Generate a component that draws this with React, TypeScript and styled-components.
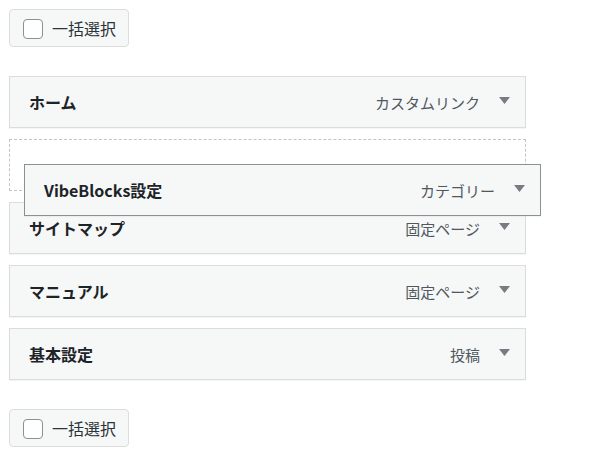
import styled, { createGlobalStyle } from "styled-components";

const GlobalStyle = createGlobalStyle`
  html, body {
    margin: 0;
    padding: 0;
    background: #fff;
  }
  body {
    font-family: "Noto Sans CJK JP", "Noto Sans", sans-serif;
    color: #1d2327;
  }
`;

const Page = styled.div`
  padding: 9px;
  width: 517px;
`;

const BulkSelect = styled.label`
  display: flex;
  align-items: center;
  gap: 9px;
  box-sizing: border-box;
  width: 120px;
  height: 38px;
  padding: 0 0 0 13px;
  background: #f6f7f7;
  border: 1px solid #dcdcde;
  border-radius: 4px;
  font-size: 16px;
  color: #2c3338;
`;

const Checkbox = styled.span`
  display: block;
  box-sizing: border-box;
  width: 20px;
  height: 20px;
  margin-top: 1px;
  background: #fff;
  border: 1px solid #8c8f94;
  border-radius: 4px;
`;

const MenuList = styled.ul`
  list-style: none;
  margin: 29px 0;
  padding: 0;
  display: flex;
  flex-direction: column;
  gap: 11px;
`;

const ItemBar = styled.li<{ $dragging?: boolean }>`
  display: flex;
  align-items: center;
  box-sizing: border-box;
  width: 517px;
  height: 52px;
  padding: 0 15px 0 19px;
  background: #f6f7f7;
  border: 1px solid ${(p) => (p.$dragging ? "#8c8f94" : "#dcdcde")};
  box-shadow: 0 1px 1px rgba(0, 0, 0, 0.04);
`;

const Placeholder = styled.li`
  position: relative;
  box-sizing: border-box;
  height: 52px;
  border: 1px dashed #c3c4c7;
`;

const Dragged = styled.div`
  position: absolute;
  left: 14px;
  top: 24px;
  z-index: 2;
`;

const Title = styled.span`
  flex: 1;
  font-size: 16px;
  font-weight: 700;
  color: #1d2327;
`;

const ItemType = styled.span`
  font-size: 15px;
  color: #50575e;
  margin-right: 19px;
`;

const Arrow = () => (
  <svg width="11" height="7" viewBox="0 0 11 7" style={{ marginTop: -4 }}>
    <polygon points="0,0 11,0 5.5,7" fill="#787c82" />
  </svg>
);

type MenuItem = { title: string; type: string };

const items: MenuItem[] = [
  { title: "サイトマップ", type: "固定ページ" },
  { title: "マニュアル", type: "固定ページ" },
  { title: "基本設定", type: "投稿" },
];

function Item({ title, type, dragging }: MenuItem & { dragging?: boolean }) {
  return (
    <ItemBar as={dragging ? "div" : "li"} $dragging={dragging}>
      <Title>{title}</Title>
      <ItemType>{type}</ItemType>
      <Arrow />
    </ItemBar>
  );
}

export default function App() {
  return (
    <Page>
      <GlobalStyle />
      <BulkSelect>
        <Checkbox />
        一括選択
      </BulkSelect>
      <MenuList>
        <Item title="ホーム" type="カスタムリンク" />
        <Placeholder>
          <Dragged>
            <Item title="VibeBlocks設定" type="カテゴリー" dragging />
          </Dragged>
        </Placeholder>
        {items.map((item) => (
          <Item key={item.title} {...item} />
        ))}
      </MenuList>
      <BulkSelect>
        <Checkbox />
        一括選択
      </BulkSelect>
    </Page>
  );
}
